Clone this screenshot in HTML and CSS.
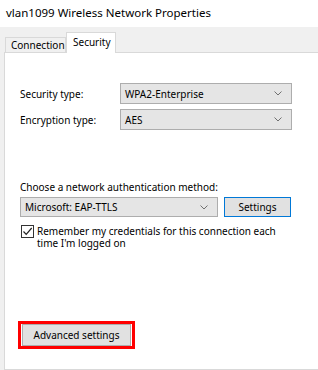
FILE: index.html
```html
<!DOCTYPE html>
<html lang="en">
<head>
    <meta charset="UTF-8">
    <title>vlan1099 Wireless Network Properties</title>
    <link rel="stylesheet" href="styles.css">
</head>
<body>
    <div class="title">vlan1099 Wireless Network Properties</div>

    <div class="dialog">
        <div class="tabs">
            <div class="tab">Connection</div>
            <div class="tab active">Security</div>
        </div>

        <div class="panel">
            <div class="type-grid">
                <span class="label">Security type:</span>
                <div class="combo">
                    <span>WPA2-Enterprise</span>
                    <svg class="chev" width="8" height="5" viewBox="0 0 8 5"><path d="M0.5 0.5 L4 4 L7.5 0.5" fill="none" stroke="#707070" stroke-width="1"/></svg>
                </div>
                <span class="label">Encryption type:</span>
                <div class="combo">
                    <span>AES</span>
                    <svg class="chev" width="8" height="5" viewBox="0 0 8 5"><path d="M0.5 0.5 L4 4 L7.5 0.5" fill="none" stroke="#707070" stroke-width="1"/></svg>
                </div>
            </div>

            <div class="auth">
                <div class="label">Choose a network authentication method:</div>
                <div class="auth-row">
                    <div class="combo auth-combo">
                        <span>Microsoft: EAP-TTLS</span>
                        <svg class="chev" width="8" height="5" viewBox="0 0 8 5"><path d="M0.5 0.5 L4 4 L7.5 0.5" fill="none" stroke="#707070" stroke-width="1"/></svg>
                    </div>
                    <button class="btn default">Settings</button>
                </div>
                <div class="check-row">
                    <span class="checkbox">
                        <svg width="11" height="11" viewBox="0 0 11 11"><path d="M1.5 5.5 L4.2 8.3 L9.7 2" fill="none" stroke="#222" stroke-width="1.2"/></svg>
                    </span>
                    <span class="check-text">Remember my credentials for this connection each time I'm logged on</span>
                </div>
            </div>

            <div class="highlight">
                <button class="btn advanced">Advanced settings</button>
            </div>
        </div>
    </div>
</body>
</html>
```

FILE: styles.css
```css
html, body {
    margin: 0;
    padding: 0;
}
body {
    width: 318px;
    height: 370px;
    overflow: hidden;
    background: #fff;
    font-family: "Noto Sans", "Open Sans", sans-serif;
    font-size: 10px;
    color: #000;
}
.title {
    height: 27px;
    line-height: 26px;
    padding-left: 6px;
    font-size: 11.5px;
    background: #fff;
}
.dialog {
    background: #f0f0f0;
    padding-left: 4px;
    height: 343px;
    display: flex;
    flex-direction: column;
}
.tabs {
    height: 25px;
    display: flex;
    align-items: flex-end;
    padding-left: 1px;
}
.tab {
    height: 15px;
    line-height: 14px;
    padding: 0 0 0 5px;
    border: 1px solid #d9d9d9;
    border-bottom: none;
    background: #f0f0f0;
    box-sizing: border-box;
    width: 61px;
    white-space: nowrap;
}
.tab.active {
    height: 21px;
    width: 50px;
    line-height: 18px;
    background: #fff;
    margin-bottom: -1px;
    position: relative;
    z-index: 1;
    padding-left: 6px;
}
.panel {
    flex: 1;
    background: #fff;
    border: 1px solid #d9d9d9;
    border-right: none;
    padding: 30px 0 0 15px;
}
.type-grid {
    display: grid;
    grid-template-columns: 100px 172px;
    grid-auto-rows: 21px;
    row-gap: 5px;
    align-items: center;
}
.combo {
    height: 21px;
    box-sizing: border-box;
    background: #e5e5e5;
    border: 1px solid #adadad;
    display: flex;
    align-items: center;
    justify-content: space-between;
    padding: 0 9px 0 4px;
}
.chev {
    display: block;
}
.auth {
    margin-top: 50px;
}
.auth .label {
    line-height: 15px;
}
.auth-row {
    display: flex;
    gap: 6px;
    margin-top: 2px;
}
.auth-combo {
    width: 198px;
    height: 20px;
}
.btn {
    font-family: inherit;
    font-size: 10px;
    color: #000;
    background: #e1e1e1;
    border: 1px solid #adadad;
    height: 20px;
    padding: 0;
    margin: 0;
}
.btn.default {
    width: 67px;
    border-color: #0078d7;
}
.check-row {
    display: flex;
    gap: 3px;
    margin-top: 8px;
    padding-left: 1px;
}
.checkbox {
    width: 13px;
    height: 13px;
    box-sizing: border-box;
    border: 1px solid #333;
    display: flex;
    align-items: center;
    justify-content: center;
    flex: none;
}
.check-text {
    width: 248px;
    line-height: 12px;
}
.highlight {
    margin: 72px 0 0 -2px;
    display: inline-block;
    border: 3px solid #f00;
    padding: 0 1px;
}
.btn.advanced {
    display: block;
    width: 109px;
    height: 22px;
}
```
